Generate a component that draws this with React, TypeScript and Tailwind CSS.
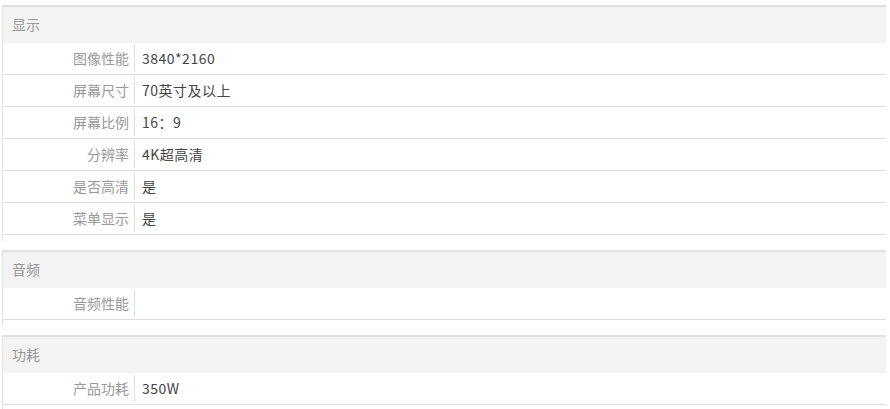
type Row = { label: string; value: string };
type Section = { title: string; rows: Row[] };

const sections: Section[] = [
  {
    title: "显示",
    rows: [
      { label: "图像性能", value: "3840*2160" },
      { label: "屏幕尺寸", value: "70英寸及以上" },
      { label: "屏幕比例", value: "16：9" },
      { label: "分辨率", value: "4K超高清" },
      { label: "是否高清", value: "是" },
      { label: "菜单显示", value: "是" },
    ],
  },
  {
    title: "音频",
    rows: [{ label: "音频性能", value: "" }],
  },
  {
    title: "功耗",
    rows: [{ label: "产品功耗", value: "350W" }],
  },
];

function SpecSection({ section }: { section: Section }) {
  return (
    <div className="mb-[9px] ml-[2px] w-[884px] border-t-2 border-l border-[#e0e0e0] pb-[6px]">
      <div className="flex h-[36px] items-center bg-[#f3f3f3] pb-[2px] pl-[9px] text-[#999]">{section.title}</div>
      {section.rows.map((row) => (
        <div key={row.label} className="flex h-8 items-center border-b border-[#dddddd] pb-[1px]">
          <div className="flex h-[27px] w-[132px] shrink-0 items-center justify-end border-r border-[#dddddd] pr-[5px] text-[#999]">
            {row.label}
          </div>
          <div className="pl-[7px] tracking-[0.5px] text-[#444]">{row.value}</div>
        </div>
      ))}
    </div>
  );
}

export default function App() {
  return (
    <div
      className="h-[409px] w-[890px] overflow-hidden bg-white pt-[5px] text-[14px]"
      style={{ fontFamily: '"Noto Sans CJK SC", "Liberation Sans", sans-serif' }}
    >
      {sections.map((s) => (
        <SpecSection key={s.title} section={s} />
      ))}
    </div>
  );
}
